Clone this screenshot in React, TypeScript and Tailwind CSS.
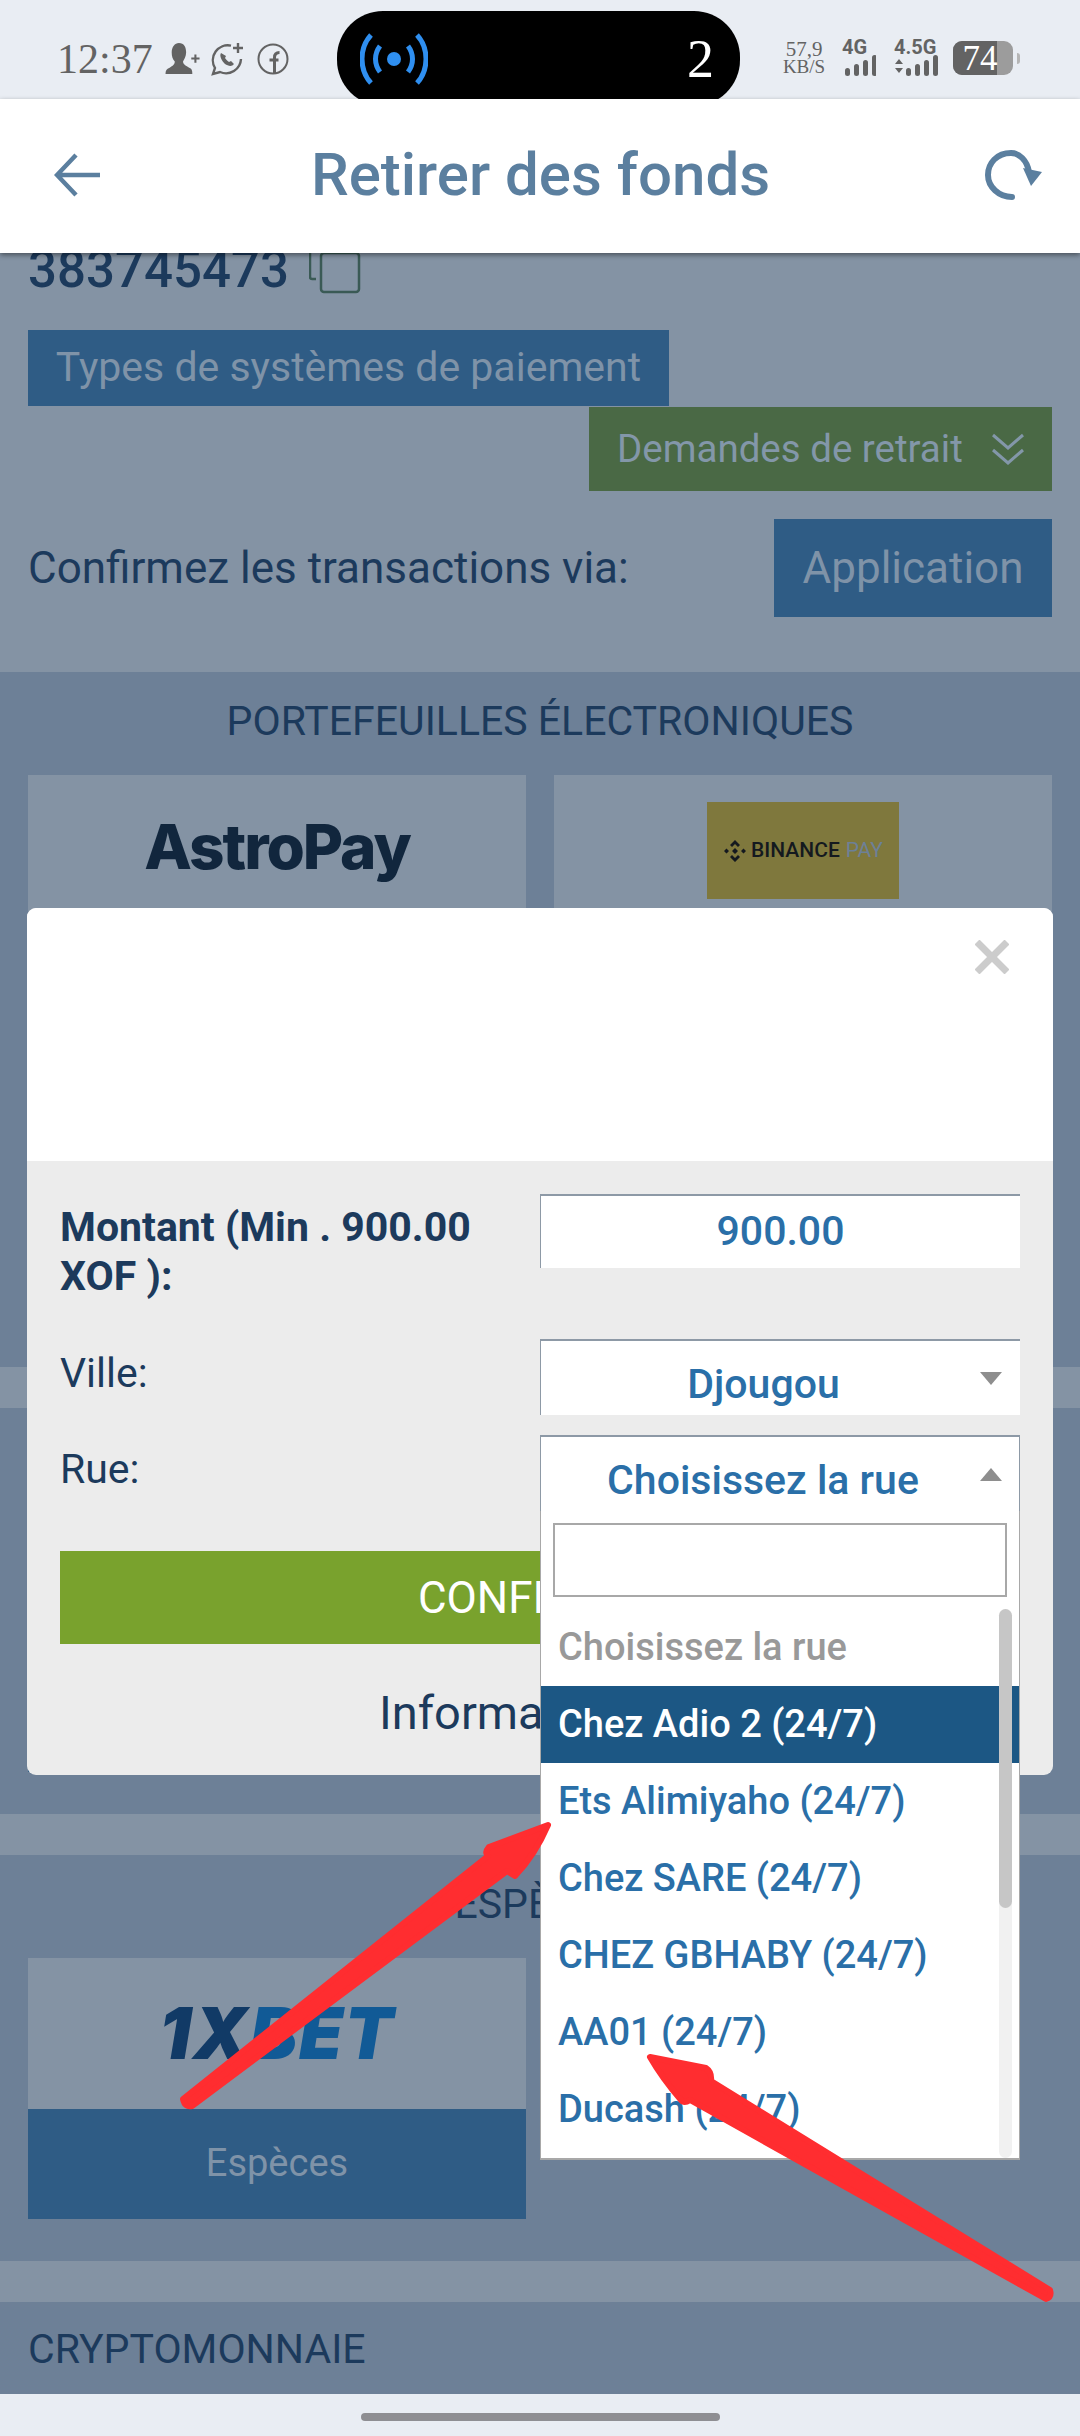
const Bars = ({ arrows }: { arrows?: boolean }) => (
  <svg width={arrows ? 44 : 34} height="22" viewBox={arrows ? '0 0 44 22' : '0 0 34 22'} fill="#636363">
    {arrows && <path d="M1 9l4-5 4 5zM1 13l4 5 4-5z" />}
    <g transform={arrows ? 'translate(12 0)' : 'translate(3 0)'}>
      <rect x="0" y="13" width="5" height="8" rx="2.5" />
      <rect x="9" y="9" width="5" height="12" rx="2.5" />
      <rect x="18" y="5" width="5" height="16" rx="2.5" />
      <rect x="27" y="0" width="5" height="21" rx="2.5" />
    </g>
  </svg>
)

const StatusBar = () => (
  <div className="relative h-[99px] bg-[#e9edf3] font-['Liberation_Serif',serif] text-[#636363]">
    <div className="flex h-full items-center pl-[57px] pt-[18px]">
      <span className="text-[42px] leading-none">12:37</span>
      <svg className="ml-[11px]" width="36" height="33" viewBox="0 0 34 32" fill="#636363">
        <path d="M14 1c5 0 7 4 7 9 0 4-2 7-3 9 0 3 3 4 6 6 3 1 3 4 3 6H1c0-3 1-5 4-6 3-2 5-3 5-6-2-2-3-5-3-9 0-5 3-9 7-9z" />
        <path d="M29 12h2v3h3v2h-3v3h-2v-3h-3v-2h3z" />
      </svg>
      <svg className="ml-[9px]" width="36" height="34" viewBox="0 0 36 34" fill="none" stroke="#636363" strokeWidth="2.4">
        <path d="M22 3.6A15 15 0 0 0 6 26l-2 6 7-2a15 15 0 0 0 21-13" />
        <path d="M12 11c-2 3 1 8 4 11 3 2 7 3 9 0l-3-3-2 1c-2-1-3-3-4-4l1-2z" fill="#636363" stroke="none" />
        <path d="M29 1v10M24 6h10" />
      </svg>
      <svg className="ml-[12px]" width="32" height="32" viewBox="0 0 32 32" fill="none" stroke="#636363" strokeWidth="2">
        <circle cx="16" cy="16" r="14.5" />
        <path d="M17.5 30V14.5c0-3 1-5 5-5M12.5 17h9" strokeWidth="3" />
      </svg>
    </div>
    <div className="absolute left-[337px] top-[11px] flex h-[95px] w-[403px] items-center justify-between rounded-[46px] bg-black pl-[23px] pr-[26px]">
      <svg width="68" height="52" viewBox="0 0 68 52" fill="none" stroke="#2f8ff0" strokeWidth="5">
        <circle cx="34" cy="26" r="7" fill="#2f8ff0" stroke="none" />
        <path d="M20 13c-6 8-6 18 0 26M48 13c6 8 6 18 0 26" />
        <path d="M11 2C-1 15-1 37 11 50M57 2c12 13 12 35 0 48" />
      </svg>
      <span className="text-[54px] leading-none text-white">2</span>
    </div>
    <div className="absolute left-[782px] top-[40px] flex items-start">
      <div className="flex w-[44px] flex-col items-center text-[21px] leading-[18px]">
        <span>57,9</span>
        <span className="whitespace-nowrap text-[19px]">KB/S</span>
      </div>
      <div className="ml-[16px] flex w-[34px] flex-col font-['Roboto',sans-serif] text-[20px] font-bold leading-[15px]">
        <span>4G</span>
        <Bars />
      </div>
      <div className="ml-[18px] flex w-[44px] flex-col font-['Roboto',sans-serif] text-[20px] font-bold leading-[15px]">
        <span className="whitespace-nowrap">4.5G</span>
        <Bars arrows />
      </div>
    </div>
    <div className="absolute left-[953px] top-[41px] flex items-center">
      <div className="flex h-[34px] w-[60px] overflow-hidden rounded-[9px] bg-[#9c9c9c]">
        <div className="flex w-[44px] flex-none items-center justify-center bg-[#636363] pl-[10px]">
          <span className="text-[35px] leading-none text-white">74</span>
        </div>
      </div>
      <div className="ml-[4px] h-[11px] w-[3px] rounded-r-full bg-[#b5b5b5]" />
    </div>
  </div>
)

const Header = () => (
  <div className="relative z-10 flex h-[154px] items-center justify-between bg-white pl-[54px] pr-[37px] pb-[3px] shadow-[0_2px_5px_rgba(0,0,0,0.45)]">
    <svg width="46" height="44" viewBox="0 0 46 44" fill="none" stroke="#5b7f9f" strokeWidth="4.5">
      <path d="M22 2L3 22l19 20M3 22h43" />
    </svg>
    <h1 className="mr-[4px] text-[60px] font-medium leading-none text-[#5b7f9f]">Retirer des fonds</h1>
    <svg width="58" height="50" viewBox="0 0 58 50" fill="none" stroke="#5b7f9f" strokeWidth="6">
      <path d="M44 22C42 10 34 3 26 3 12 3 3 13 3 25c0 12 11 22 24 22" strokeLinecap="round" />
      <path d="M38 18l19 4-11 14z" fill="#5b7f9f" stroke="none" />
    </svg>
  </div>
)

const Tile = ({ logo, label }: { logo?: React.ReactNode; label?: string }) => (
  <div className="flex h-[261px] flex-col bg-[#8493a4]">
    <div className="flex h-[151px] items-center justify-center">{logo}</div>
    <div className="flex flex-1 items-center justify-center bg-[#2f5c85] pb-[2px] text-[38px] text-[#7f93a8]">{label}</div>
  </div>
)

const Section = ({ title, tiles }: { title?: string; tiles: React.ReactNode }) => (
  <section className="bg-[#6d8097] px-[28px] pb-[42px]">
    <h2 className="flex h-[103px] items-center justify-center pb-[4px] text-[41px] leading-none text-[#1c3a5c]">{title}</h2>
    <div className="grid grid-cols-2 gap-[28px]">{tiles}</div>
  </section>
)

const Band = () => <div className="h-[41px] bg-[#8493a4]" />

const AstroPayLogo = () => (
  <span className="mb-[7px] font-['Inter',sans-serif] text-[62px] font-extrabold leading-none tracking-[-2px] text-[#11263d]">AstroPay</span>
)

const BinanceLogo = () => (
  <div className="flex h-[97px] w-[192px] items-center justify-center bg-[#7f783d]">
    <svg width="24" height="24" viewBox="0 0 24 24" fill="#14191f">
      <path d="M12 1l5 5-2 2-3-3-3 3-2-2zM12 23l5-5-2-2-3 3-3-3-2 2zM1 12l2.5-2.5L6 12l-2.500 2.500zM23 12l-2.500-2.500L18 12l2.500 2.500zM12 9l3 3-3 3-3-3z" />
    </svg>
    <span className="ml-[4px] text-[21px] font-medium leading-none text-[#14191f]">BINANCE</span>
    <span className="ml-[6px] text-[21px] leading-none text-[#6d8097]">PAY</span>
  </div>
)

const XBetLogo = () => (
  <span className="mb-[1px] font-['Inter',sans-serif] text-[71px] font-black italic leading-none tracking-[1.5px]">
    <span className="text-[#113a66]">1X</span>
    <span className="text-[#115a96]">BET</span>
  </span>
)

const options = [
  'Choisissez la rue',
  'Chez Adio 2 (24/7)',
  'Ets Alimiyaho (24/7)',
  'Chez SARE (24/7)',
  'CHEZ GBHABY (24/7)',
  'AA01 (24/7)',
  'Ducash (24/7)',
  'Sika (24/7)',
]

const RueDropdown = () => (
  <div className="absolute left-[-1px] top-[74px] z-20 h-[649px] w-[480px] overflow-hidden border-x border-b-2 border-[#a8a8a8] bg-white">
    <div className="px-[12px] pt-[12px]">
      <div className="h-[74px] border-2 border-[#a8a8a8] bg-white" />
    </div>
    <div className="mt-[12px]">
      {options.map((o, i) => (
        <div
          key={o}
          className={
            i === 0
              ? 'flex h-[77px] items-center pl-[17px] text-[38px] text-[#999999]'
              : i === 1
                ? 'flex h-[77px] items-center bg-[#1c5784] pl-[17px] text-[38px] text-white'
                : 'flex h-[77px] items-center pl-[17px] text-[38px] text-[#2a6fa8]'
          }
        >
          {o}
        </div>
      ))}
    </div>
    <div className="absolute bottom-0 left-[458px] top-[98px] w-[13px] rounded-full bg-[#f1f1f1]" />
    <div className="absolute left-[458px] top-[98px] h-[299px] w-[13px] rounded-full bg-[#b4b4b4]/70" />
  </div>
)

const Modal = () => (
  <div className="absolute left-[27px] top-[908px] z-20 h-[867px] w-[1026px] rounded-[9px] bg-[#ececec]">
    <div className="relative h-[253px] rounded-t-[9px] bg-white">
      <svg className="absolute left-[948px] top-[32px]" width="34" height="34" viewBox="0 0 34 34" stroke="#cccccc" strokeWidth="7">
        <path d="M2 2l30 30M32 2L2 32" />
      </svg>
    </div>
    <div className="px-[33px] pt-[33px]">
      <div className="flex">
        <div className="w-[480px] flex-none pr-[40px] pt-[9px] text-[41px] font-bold leading-[49px] text-[#1c3a5c]">Montant (Min . 900.00 XOF ):</div>
        <div className="flex h-[74px] flex-1 items-center justify-center border-l border-t-2 border-[#8d99a6] bg-white text-[41px] font-medium text-[#2a6fa8]">900.00</div>
      </div>
      <div className="mt-[38px] flex">
        <div className="w-[480px] flex-none pt-[12px] text-[41px] leading-[44px] text-[#1c3a5c]">Ville:</div>
        <div className="relative flex h-[76px] flex-1 items-center justify-center border-l border-t-2 border-[#8d99a6] bg-white pr-[34px] pt-[14px] text-[41px] font-medium text-[#2a6fa8]">
          Djougou
          <div className="absolute left-[439px] top-[31px] h-0 w-0 border-x-[11px] border-t-[13px] border-x-transparent border-t-[#8e8e8e]" />
        </div>
      </div>
      <div className="mt-[20px] flex">
        <div className="w-[480px] flex-none pt-[12px] text-[41px] leading-[44px] text-[#1c3a5c]">Rue:</div>
        <div className="relative flex h-[76px] flex-1 items-center justify-center border-x border-t-2 border-[#8d99a6] bg-white pr-[34px] pt-[14px] text-[41px] font-medium text-[#2a6fa8]">
          Choisissez la rue
          <div className="absolute left-[439px] top-[31px] h-0 w-0 border-x-[11px] border-b-[13px] border-x-transparent border-b-[#8e8e8e]" />
          <RueDropdown />
        </div>
      </div>
      <button className="mt-[40px] block h-[93px] w-full bg-[#79a22d] text-[44px] text-white">CONFIRMER</button>
      <div className="mt-[45px] pl-[319px] text-[47px] leading-none text-[#1c3a5c]">Informations</div>
    </div>
  </div>
)

const Arrows = () => (
  <svg className="pointer-events-none absolute inset-0 z-30" width="1080" height="2436" viewBox="0 0 1080 2436" fill="#ff2d30" stroke="#ff2d30" strokeWidth="6" strokeLinejoin="round">
    <path d="M548 1825L489 1847Q484 1853 488 1856L183 2099Q185 2108 192 2106L507 1871 515 1876Q535 1855 548 1825Z" />
    <path d="M650 2057L706 2068Q712 2072 711 2081L1050 2290Q1052 2297 1046 2299L690 2100Q684 2104 681 2100 662 2078 650 2057Z" />
  </svg>
)

export default function App() {
  return (
    <div className="relative h-[2436px] w-[1080px] overflow-hidden bg-[#6d8097] font-['Roboto',sans-serif]">
      <StatusBar />
      <Header />
      <main>
        <div className="flex h-[419px] flex-col bg-[#8493a4] px-[28px]">
          <div className="flex h-[77px] flex-none">
            <span className="mt-[-7px] text-[51px] font-medium leading-[48px] text-[#1c3a5c]">383745473</span>
            <svg className="ml-[20px] mt-[-10px]" width="52" height="52" viewBox="0 0 52 52" fill="none" stroke="#3a5a55" strokeWidth="2.5">
              <path d="M7 36H3a2 2 0 0 1-2-2V2" />
              <rect x="12" y="10" width="38" height="39" rx="3" />
            </svg>
          </div>
          <div className="flex h-[76px] w-[641px] flex-none items-center justify-center bg-[#2f5c85] text-[41px] text-[#7f93a8]">Types de systèmes de paiement</div>
          <div className="mt-[1px] flex h-[84px] w-[463px] flex-none items-center gap-[28px] self-end bg-[#4a6945] pl-[28px] text-[38.5px] text-[#8397a9]">
            Demandes de retrait
            <svg width="34" height="32" viewBox="0 0 34 32" fill="none" stroke="#8397a9" strokeWidth="3">
              <path d="M2 2l15 13L32 2M2 17l15 13 15-13" />
            </svg>
          </div>
          <div className="mt-[28px] flex h-[98px] flex-none items-center justify-between">
            <span className="text-[44px] text-[#1c3a5c]">Confirmez les transactions via:</span>
            <span className="flex h-full w-[278px] items-center justify-center bg-[#2f5c85] text-[44px] text-[#7f93a8]">Application</span>
          </div>
        </div>
        <Section
          title="PORTEFEUILLES ÉLECTRONIQUES"
          tiles={
            <>
              <Tile logo={<AstroPayLogo />} />
              <Tile logo={<BinanceLogo />} />
              <Tile />
              <Tile />
            </>
          }
        />
        <Band />
        <Section tiles={<Tile />} />
        <Band />
        <Section title="ESPÈCES" tiles={<Tile logo={<XBetLogo />} label="Espèces" />} />
        <Band />
        <div className="flex h-[92px] items-center bg-[#6d8097] px-[28px] pt-[3px] text-[41px] text-[#1c3a5c]">CRYPTOMONNAIE</div>
        <div className="flex h-[44px] items-start justify-center bg-[#e9edf3] pt-[19px]">
          <div className="h-[8px] w-[359px] rounded-full bg-[#8e8e92]" />
        </div>
      </main>
      <Modal />
      <Arrows />
    </div>
  )
}
